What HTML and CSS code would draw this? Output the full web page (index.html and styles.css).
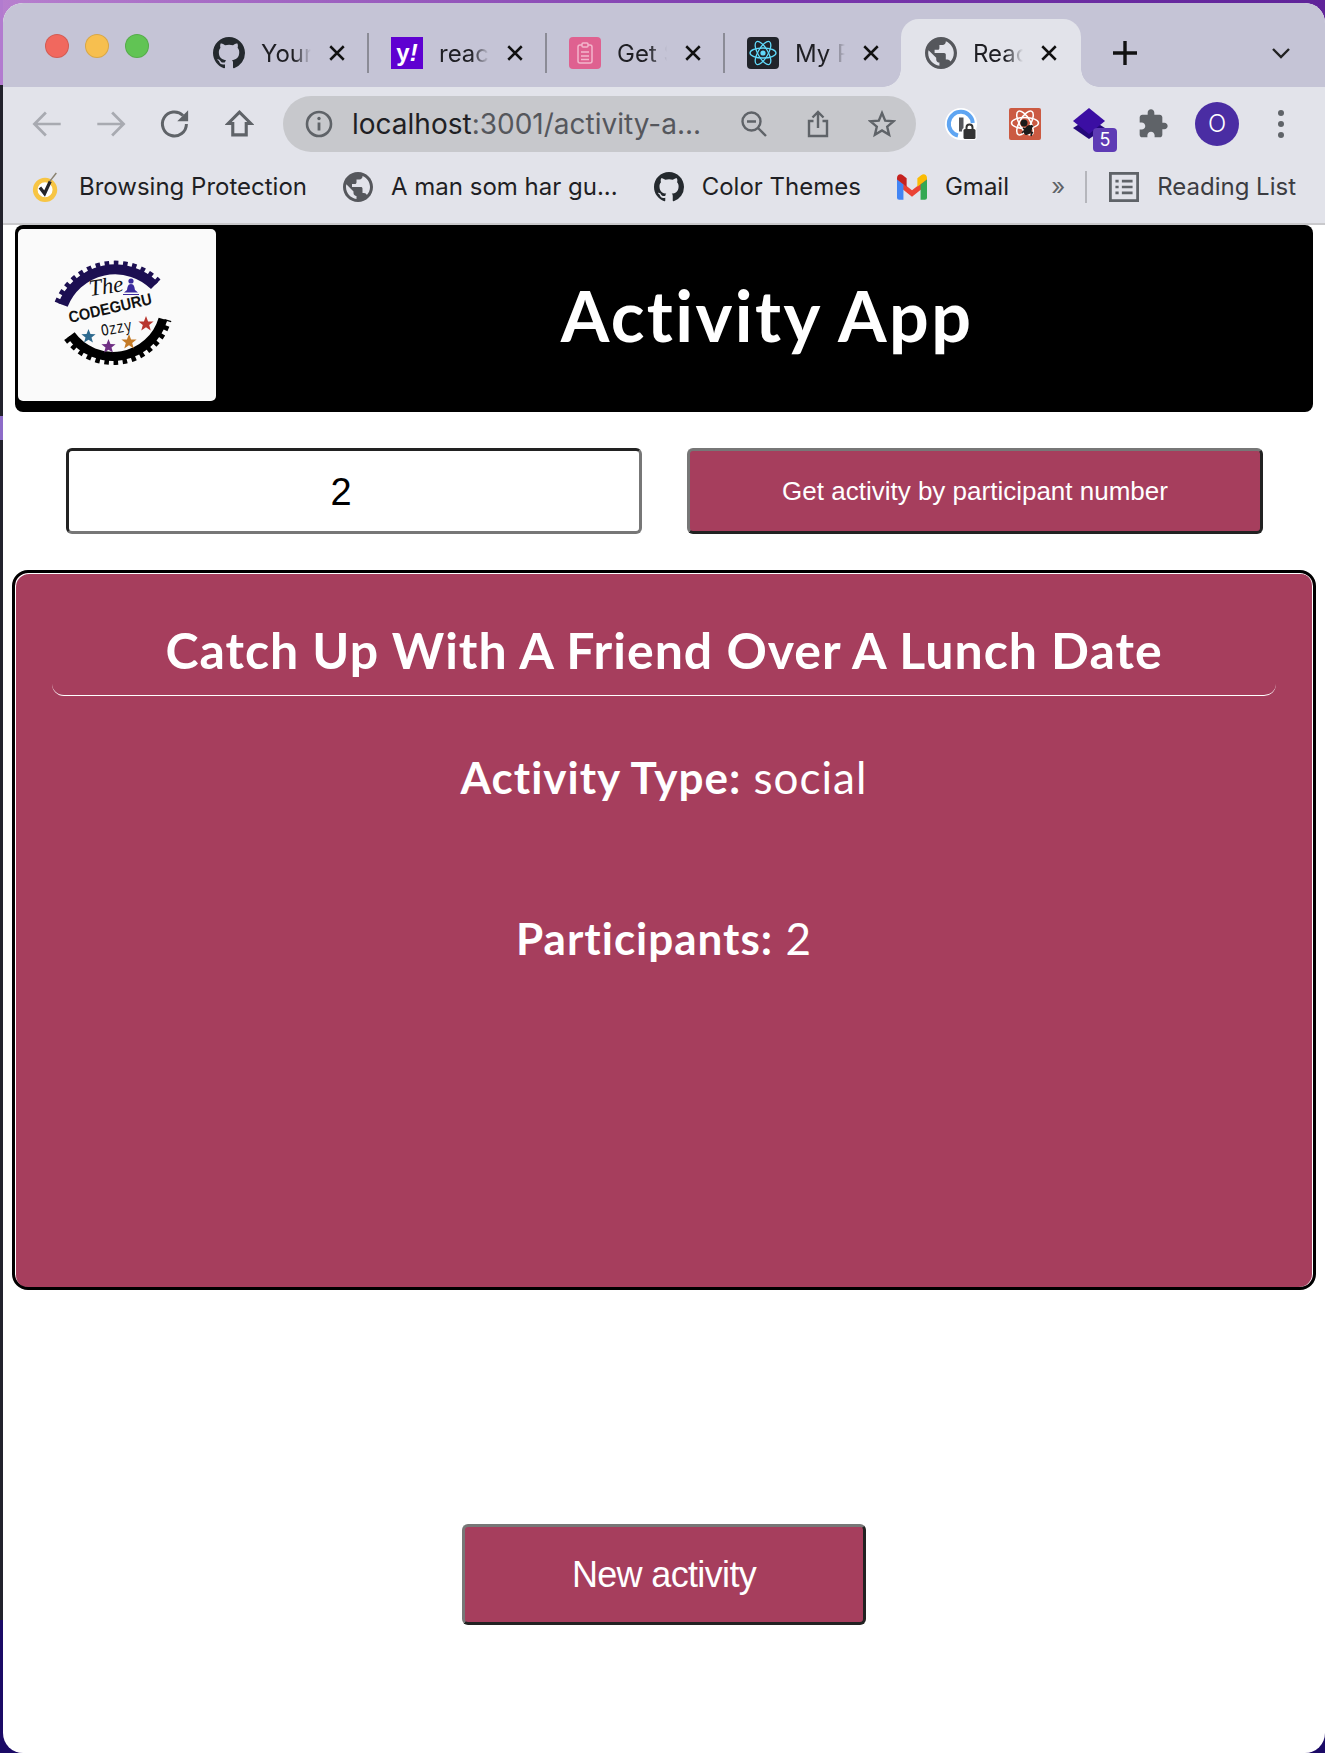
FILE: index.html
```html
<!DOCTYPE html>
<html lang="en">
<head>
    <meta charset="UTF-8">
    <title>React App</title>
    <link rel="stylesheet" href="styles.css">
</head>
<body>
    <!-- shared icons -->
    <svg class="icon-defs">
        <symbol id="github" viewBox="0 0 16 16"><path fill="#24292e" d="M8 0C3.58 0 0 3.58 0 8c0 3.54 2.29 6.53 5.47 7.59.4.07.55-.17.55-.38 0-.19-.01-.82-.01-1.49-2.01.37-2.53-.49-2.69-.94-.09-.23-.48-.94-.82-1.13-.28-.15-.68-.52-.01-.53.63-.01 1.08.58 1.23.82.72 1.21 1.87.87 2.33.66.07-.52.28-.87.51-1.07-1.78-.2-3.64-.89-3.64-3.95 0-.87.31-1.59.82-2.15-.08-.2-.36-1.02.08-2.12 0 0 .67-.21 2.2.82.64-.18 1.32-.27 2-.27.68 0 1.36.09 2 .27 1.53-1.04 2.2-.82 2.2-.82.44 1.1.16 1.92.08 2.12.51.56.82 1.27.82 2.15 0 3.07-1.87 3.75-3.65 3.95.29.25.54.73.54 1.48 0 1.07-.01 1.93-.01 2.2 0 .21.15.46.55.38A8.013 8.013 0 0016 8c0-4.42-3.58-8-8-8z"/></symbol>
        <symbol id="globe" viewBox="2 2 20 20"><path fill="#55575c" d="M12 2C6.48 2 2 6.48 2 12s4.48 10 10 10 10-4.48 10-10S17.52 2 12 2zm-1 17.93c-3.95-.49-7-3.85-7-7.93 0-.62.08-1.21.21-1.79L9 15v1c0 1.1.9 2 2 2v1.93zm6.9-2.54c-.26-.81-1-1.39-1.9-1.39h-1v-3c0-.55-.45-1-1-1H8v-2h2c.55 0 1-.45 1-1V7h2c1.1 0 2-.9 2-2v-.41c2.93 1.19 5 4.06 5 7.41 0 2.08-.8 3.97-2.1 5.39z"/></symbol>
        <symbol id="close" viewBox="0 0 16 16"><path fill="none" stroke="#111" stroke-width="2.2" d="M2 2l12 12M14 2L2 14"/></symbol>
        <symbol id="star" viewBox="-10 -10 20 20"><polygon points="0,-10 2.6,-3.2 9.5,-3.1 4,1.3 5.9,8.1 0,4.2 -5.9,8.1 -4,1.3 -9.5,-3.1 -2.6,-3.2"/></symbol>
    </svg>

    <div class="window">
        <div class="tab-strip">
            <div class="lights">
                <span class="light red"></span>
                <span class="light yellow"></span>
                <span class="light green"></span>
            </div>

            <div class="tab">
                <svg class="favicon"><use href="#github"/></svg>
                <span class="tab-title">Your</span>
                <svg class="tab-close"><use href="#close"/></svg>
            </div>
            <span class="tab-sep"></span>
            <div class="tab">
                <span class="favicon yahoo">y<i>!</i></span>
                <span class="tab-title">react</span>
                <svg class="tab-close"><use href="#close"/></svg>
            </div>
            <span class="tab-sep"></span>
            <div class="tab">
                <svg class="favicon" viewBox="0 0 32 32">
                    <rect width="32" height="32" rx="4" fill="#df6190"/>
                    <rect x="9" y="8" width="14" height="18" rx="2" fill="none" stroke="#f3b6cc" stroke-width="1.5"/>
                    <rect x="13" y="6" width="6" height="4" rx="1" fill="#df6190" stroke="#f3b6cc" stroke-width="1.5"/>
                    <path d="M12 15h8M12 19h8M12 22.5h8" stroke="#f3b6cc" stroke-width="1.3"/>
                </svg>
                <span class="tab-title">Get Started</span>
                <svg class="tab-close"><use href="#close"/></svg>
            </div>
            <span class="tab-sep"></span>
            <div class="tab">
                <svg class="favicon" viewBox="0 0 32 32">
                    <rect width="32" height="32" rx="4" fill="#20232a"/>
                    <g fill="none" stroke="#61dafb" stroke-width="1.3">
                        <ellipse cx="16" cy="16" rx="13" ry="5"/>
                        <ellipse cx="16" cy="16" rx="13" ry="5" transform="rotate(60 16 16)"/>
                        <ellipse cx="16" cy="16" rx="13" ry="5" transform="rotate(120 16 16)"/>
                    </g>
                    <circle cx="16" cy="16" r="2.6" fill="#61dafb"/>
                </svg>
                <span class="tab-title">My React</span>
                <svg class="tab-close"><use href="#close"/></svg>
            </div>
            <div class="tab active">
                <svg class="favicon"><use href="#globe"/></svg>
                <span class="tab-title">React App</span>
                <svg class="tab-close"><use href="#close"/></svg>
            </div>

            <svg class="new-tab" viewBox="0 0 26 26"><path stroke="#111" stroke-width="3.4" d="M13 1v24M1 13h24"/></svg>
            <svg class="tab-list" viewBox="0 0 20 12"><path fill="none" stroke="#222" stroke-width="2.4" d="M2 2l8 8 8-8"/></svg>
        </div>

        <div class="toolbar">
            <div class="tool">
                <svg viewBox="0 0 28 28"><path fill="none" stroke="#a8aab1" stroke-width="2.4" d="M26 14H3M13 4L3 14l10 10"/></svg>
            </div>
            <div class="tool">
                <svg viewBox="0 0 28 28"><path fill="none" stroke="#a8aab1" stroke-width="2.4" d="M2 14h23M15 4l10 10-10 10"/></svg>
            </div>
            <div class="tool">
                <svg viewBox="0 0 28 28"><path fill="none" stroke="#5f6368" stroke-width="2.6" d="M24 14a10.5 10.5 0 1 1-3-7.4"/><path fill="#5f6368" d="M25.500 2v9.500H16z"/></svg>
            </div>
            <div class="tool">
                <svg class="home-icon" viewBox="0 0 28 28"><path fill="none" stroke="#5f6368" stroke-width="3" d="M14 3L3 14h4.500v11h13V14H25z"/></svg>
            </div>

            <div class="omnibox">
                <svg class="omni-icon" viewBox="0 0 28 28"><circle cx="14" cy="14" r="12" fill="none" stroke="#5f6368" stroke-width="2.6"/><path stroke="#5f6368" stroke-width="2.8" d="M14 12.500v8"/><circle cx="14" cy="8.500" r="1.700" fill="#5f6368"/></svg>
                <span class="url"><span class="url-host">localhost</span>:3001/activity-a...</span>
                <div class="omni-right">
                    <svg class="omni-icon" viewBox="0 0 28 28"><circle cx="11.500" cy="11.500" r="9" fill="none" stroke="#5f6368" stroke-width="2.4"/><path stroke="#5f6368" stroke-width="2.4" d="M7 11.500h9M18 18l8 8"/></svg>
                    <svg class="omni-icon" viewBox="0 0 28 28"><path fill="none" stroke="#5f6368" stroke-width="2.4" d="M9.500 11H5v15h18V11h-4.500M14 18V2M8.500 7.500L14 2l5.500 5.500"/></svg>
                    <svg class="omni-icon" viewBox="0 0 28 28"><path fill="none" stroke="#5f6368" stroke-width="2.4" d="M14 3l3.200 7.600 8.300.7-6.300 5.400 1.900 8.100-7.100-4.300-7.100 4.300 1.900-8.100-6.300-5.400 8.300-.7z"/></svg>
                </div>
            </div>

            <div class="extensions">
                <div class="tool">
                    <svg viewBox="0 0 32 32">
                        <circle cx="16" cy="16" r="16" fill="#fff"/>
                        <path fill="none" stroke="#5fa5f2" stroke-width="4" d="M13 27.500A12 12 0 1 1 27.800 15"/>
                        <rect x="14" y="9.500" width="4.500" height="14" fill="#55575c"/>
                        <rect x="17" y="20" width="14.500" height="12" rx="2.500" fill="#fff"/>
                        <rect x="18.500" y="21" width="12" height="10" rx="1.500" fill="#333"/>
                        <path fill="none" stroke="#333" stroke-width="2" d="M21.500 21.500v-2a3 3 0 0 1 6 0v2"/>
                    </svg>
                </div>
                <div class="tool">
                    <svg viewBox="0 0 32 32">
                        <rect width="32" height="32" rx="2" fill="#cb5a42"/>
                        <g fill="none" stroke="#fff" stroke-width="1.500">
                            <ellipse cx="16" cy="15" rx="13.500" ry="5.500"/>
                            <ellipse cx="16" cy="15" rx="13.500" ry="5.500" transform="rotate(60 16 15)"/>
                            <ellipse cx="16" cy="15" rx="13.500" ry="5.500" transform="rotate(120 16 15)"/>
                        </g>
                        <circle cx="15" cy="15" r="3.500" fill="#1b1b1b"/>
                        <ellipse cx="19" cy="22" rx="3.500" ry="5.500" fill="#1b1b1b" transform="rotate(30 19 22)"/>
                        <path stroke="#1b1b1b" stroke-width="1.600" d="M14 20l10 5M15 24l9-6M23 17l-1 3M13 25l3-3M22 28l1-4"/>
                    </svg>
                </div>
                <div class="tool">
                    <svg viewBox="0 0 32 32">
                        <path fill="#24087a" d="M16 10L32 20 16 31 0 20z"/>
                        <path fill="#3b0ea3" d="M16 0l16 13-16 13L0 13z"/>
                    </svg>
                    <span class="ext-badge">5</span>
                </div>
                <div class="tool">
                    <svg viewBox="0 0 24 24"><path fill="#5f6368" d="M20.500 11H19V7c0-1.100-.9-2-2-2h-4V3.500C13 2.120 11.880 1 10.500 1S8 2.120 8 3.500V5H4c-1.100 0-1.990.9-1.990 2v3.800H3.500c1.490 0 2.700 1.210 2.700 2.700s-1.210 2.700-2.700 2.700H2V20c0 1.100.9 2 2 2h3.800v-1.500c0-1.490 1.210-2.700 2.700-2.700 1.490 0 2.700 1.210 2.700 2.700V22H17c1.100 0 2-.9 2-2v-4h1.500c1.380 0 2.500-1.120 2.500-2.500S21.880 11 20.500 11z"/></svg>
                </div>
                <div class="tool"><span class="avatar">O</span></div>
                <div class="tool">
                    <svg viewBox="0 0 32 32"><circle cx="16" cy="5" r="3" fill="#5f6368"/><circle cx="16" cy="16" r="3" fill="#5f6368"/><circle cx="16" cy="27" r="3" fill="#5f6368"/></svg>
                </div>
            </div>
        </div>

        <div class="bookmarks">
            <div class="bookmark">
                <svg class="bm-icon" viewBox="0 0 28 32">
                    <circle cx="13" cy="19" r="10.500" fill="#fff" stroke="#f7c544" stroke-width="5"/>
                    <path fill="none" stroke="#26262a" stroke-width="3.500" d="M7.500 16.500l5 6.500L18.500 10"/>
                    <path stroke="#8a8270" stroke-width="1.600" d="M18 10l7-9"/>
                </svg>
                <span>Browsing Protection</span>
            </div>
            <div class="bookmark">
                <svg class="bm-icon"><use href="#globe"/></svg>
                <span>A man som har gu...</span>
            </div>
            <div class="bookmark">
                <svg class="bm-icon"><use href="#github"/></svg>
                <span>Color Themes</span>
            </div>
            <div class="bookmark">
                <svg class="bm-icon" viewBox="0 0 28 24">
                    <path fill="#ea4335" d="M0 4l14 11L28 4v6L14 21 0 10z"/>
                    <path fill="#c5221f" d="M0 3.500C0 .5 3 -1 5.500 1L9 3.800v8L0 5z"/>
                    <path fill="#fbbc04" d="M28 3.500c0-3-3-4.500-5.500-2.500L19 3.800v8L28 5z"/>
                    <path fill="#4285f4" d="M0 5l6 4.700V24H2a2 2 0 0 1-2-2z"/>
                    <path fill="#34a853" d="M28 5l-6 4.700V24h4a2 2 0 0 0 2-2z"/>
                </svg>
                <span>Gmail</span>
            </div>
            <span class="bm-more">»</span>
            <span class="bm-sep"></span>
            <div class="bookmark reading">
                <svg class="bm-icon" viewBox="0 0 28 28">
                    <rect x="1.300" y="1.300" width="25.400" height="25.400" fill="none" stroke="#5f6368" stroke-width="2.600"/>
                    <path stroke="#5f6368" stroke-width="2.400" d="M6 8.500h3M12 8.500h10M6 14h3M12 14h10M6 19.500h3M12 19.500h10"/>
                </svg>
                <span>Reading List</span>
            </div>
        </div>

        <div class="page">
            <header class="app-header">
                <div class="logo">
                    <svg viewBox="0 0 198 172">
                        <g fill="none">
                            <path stroke="#1c0f52" stroke-width="10" d="M45 76A56 56 0 0 1 136.500 56.500"/>
                            <path stroke="#1c0f52" stroke-width="7" stroke-dasharray="4.500 4.500" d="M40 74A61 61 0 0 1 140 53"/>
                            <path stroke="#000" stroke-width="9" d="M53 106A52 52 0 0 0 145 90"/>
                            <path stroke="#000" stroke-width="7" stroke-dasharray="4.500 4.500" d="M49 109A57 57 0 0 0 150 91"/>
                        </g>
                        <text class="logo-the" x="72" y="67" transform="rotate(-8 72 67)">The</text>
                        <circle cx="113" cy="52" r="2.600" fill="#3a2a9c"/>
                        <path fill="#3a2a9c" d="M113 55c3 0 3.500 3 4 6l3 2.500h-14l3-2.500c.5-3 1-6 4-6zM105 65h16v1h-16z"/>
                        <text class="logo-name" x="52" y="94" textLength="85" lengthAdjust="spacingAndGlyphs" transform="rotate(-13 52 94)">CODEGURU</text>
                        <text class="logo-ozzy" x="84" y="107" textLength="31" lengthAdjust="spacingAndGlyphs" transform="rotate(-10 84 107)">Ozzy</text>
                        <use href="#star" x="63" y="100" width="15" height="15" fill="#2e6a8f"/>
                        <use href="#star" x="83" y="110" width="15" height="15" fill="#6f2f84"/>
                        <use href="#star" x="103" y="105" width="16" height="16" fill="#c47a26"/>
                        <use href="#star" x="120" y="87" width="16" height="16" fill="#b8372f"/>
                    </svg>
                </div>
                <h1 class="app-title">Activity App</h1>
            </header>

            <div class="search-row">
                <input class="participants-input" type="text" value="2">
                <button class="app-button small">Get activity by participant number</button>
            </div>

            <section class="activity-card">
                <h2 class="activity-title">Catch Up With A Friend Over A Lunch Date</h2>
                <p class="activity-line"><strong>Activity Type:</strong> social</p>
                <p class="activity-line"><strong>Participants:</strong> 2</p>
            </section>

            <div class="new-row">
                <button class="app-button large">New activity</button>
            </div>
        </div>
    </div>
</body>
</html>
```

FILE: styles.css
```css
* {
    box-sizing: border-box;
}
body {
    margin: 0;
    height: 1753px;
    overflow: hidden;
    font-family: Inter, "Noto Sans", sans-serif;
    background:
        linear-gradient(to bottom, #b27bcf 0, #b27bcf 85px, #22222c 85px, #22222c 416px, #8d6cc8 416px, #8d6cc8 440px, #22222c 440px, #22222c 1620px, #1b0a66 1620px) 0 0 / 3px 100% no-repeat,
        linear-gradient(to right, #b77fce, #7a38ad 60%, #5f2399) 0 0 / 100% 40px no-repeat,
        #1b0a66;
}
.icon-defs {
    display: none;
}

/* browser window */
.window {
    margin: 3px 0 0 3px;
    height: 1750px;
    background: #fff;
    border-radius: 20px;
    overflow: hidden;
}
.tab-strip {
    display: flex;
    align-items: flex-end;
    height: 84px;
    padding-left: 42px;
    background: #c5c4d6;
}
.lights {
    display: flex;
    gap: 16px;
    align-self: flex-start;
    margin: 31px 42px 0 0;
}
.light {
    width: 24px;
    height: 24px;
    border-radius: 50%;
    border: 1px solid rgba(0,0,0,0.12);
}
.light.red { background: #f1685e; }
.light.yellow { background: #f7bf4f; }
.light.green { background: #61c454; }

.tab {
    display: flex;
    align-items: center;
    flex: none;
    width: 176px;
    height: 68px;
    padding-left: 22px;
    font-size: 24px;
    color: #1f1f24;
}
.tab.active {
    position: relative;
    width: 180px;
    padding-left: 24px;
    background: #e2e3ea;
    border-radius: 18px 18px 0 0;
}
.tab.active::before,
.tab.active::after {
    content: "";
    position: absolute;
    bottom: 0;
    width: 18px;
    height: 18px;
}
.tab.active::before {
    left: -18px;
    background: radial-gradient(circle at 0 0, transparent 17.500px, #e2e3ea 18px);
}
.tab.active::after {
    right: -18px;
    background: radial-gradient(circle at 100% 0, transparent 17.500px, #e2e3ea 18px);
}
.favicon {
    flex: none;
    width: 32px;
    height: 32px;
}
.yahoo {
    display: flex;
    align-items: center;
    justify-content: center;
    background: #5f01d1;
    color: #fff;
    font-family: "Liberation Sans", sans-serif;
    font-size: 24px;
    font-weight: bold;
}
.tab-title {
    width: 50px;
    margin-left: 16px;
    overflow: hidden;
    white-space: nowrap;
    -webkit-mask-image: linear-gradient(to right, #000 65%, transparent 100%);
    mask-image: linear-gradient(to right, #000 65%, transparent 100%);
}
.tab-close {
    flex: none;
    width: 18px;
    height: 18px;
    margin-left: 17px;
}
.tab-sep {
    flex: none;
    width: 2px;
    height: 40px;
    margin-bottom: 14px;
    background: #8b8b96;
}
.new-tab {
    width: 26px;
    height: 26px;
    margin: 0 0 21px 31px;
}
.tab-list {
    width: 20px;
    height: 12px;
    margin: 0 34px 28px auto;
}

/* toolbar */
.toolbar {
    display: flex;
    align-items: center;
    height: 73px;
    padding-left: 12px;
    background: #e2e3ea;
}
.tool {
    position: relative;
    display: flex;
    align-items: center;
    justify-content: center;
    flex: none;
    width: 64px;
    height: 64px;
}
.tool svg {
    width: 32px;
    height: 32px;
}
.tool svg.home-icon {
    width: 29px;
    height: 29px;
}
.omnibox {
    display: flex;
    align-items: center;
    flex: none;
    width: 633px;
    height: 56px;
    margin-left: 12px;
    padding: 0 20px 0 22px;
    background: #c7c8cc;
    border-radius: 28px;
}
.omni-icon {
    flex: none;
    width: 28px;
    height: 28px;
}
.url {
    margin-left: 19px;
    font-size: 28px;
    color: #55575c;
    white-space: nowrap;
}
.url-host {
    color: #1f1f24;
}
.omni-right {
    display: flex;
    gap: 36px;
    margin-left: auto;
}
.extensions {
    display: flex;
    margin-left: 13px;
}
.ext-badge {
    position: absolute;
    right: 4px;
    bottom: 4px;
    width: 24px;
    height: 24px;
    background: #5e3bb5;
    border-radius: 4px;
    color: #fff;
    font-size: 18px;
    line-height: 24px;
    text-align: center;
}
.avatar {
    width: 44px;
    height: 44px;
    background: #4a2da3;
    border-radius: 50%;
    color: #fff;
    font-size: 24px;
    font-weight: 300;
    line-height: 44px;
    text-align: center;
}

/* bookmarks bar */
.bookmarks {
    display: flex;
    align-items: center;
    height: 65px;
    padding: 0 0 10px 28px;
    background: #e2e3ea;
    border-bottom: 2px solid #c9c9cc;
    font-size: 24px;
    color: #1f1f24;
}
.bookmark {
    display: flex;
    align-items: center;
    gap: 18px;
    margin-right: 36px;
}
.bm-icon {
    flex: none;
    width: 30px;
    height: 30px;
}
.bm-more {
    margin-left: auto;
    color: #5f6368;
    font-size: 24px;
}
.bm-sep {
    width: 2px;
    height: 32px;
    margin: 0 22px 0 20px;
    background: #b5b6bc;
}
.bookmark.reading {
    margin-right: 29px;
    color: #3c3d42;
}

/* the app */
.page {
    padding: 0 0 0 9px;
    font-family: Lato, "Open Sans", sans-serif;
}
.app-header {
    display: flex;
    align-items: center;
    width: 1298px;
    height: 187px;
    margin-left: 3px;
    padding: 4px 3px 11px;
    background: #000;
    border-radius: 8px;
}
.logo {
    flex: none;
    width: 198px;
    height: 172px;
    background: #fafafa;
    border-radius: 5px;
}
.logo svg {
    display: block;
    width: 100%;
    height: 100%;
}
.logo-the {
    font-family: "Liberation Serif", serif;
    font-style: italic;
    font-size: 23px;
    fill: #111;
}
.logo-name {
    font-family: "Liberation Sans", sans-serif;
    font-weight: bold;
    font-size: 16px;
    fill: #111;
}
.logo-ozzy {
    font-family: "Liberation Mono", monospace;
    font-size: 17px;
    fill: #111;
}
.app-title {
    flex: 1;
    margin: 0;
    padding-left: 8px;
    color: #fff;
    font-size: 70px;
    font-weight: 700;
    letter-spacing: 2.4px;
    text-align: center;
}
.search-row {
    display: grid;
    grid-template-columns: 576px 576px;
    gap: 45px;
    margin: 36px 0 0 54px;
}
.participants-input {
    height: 86px;
    padding: 2px 26px 0 0;
    border: 3px solid;
    border-color: #222 #777 #777 #222;
    border-radius: 6px;
    background: #fff;
    font-family: "Liberation Sans", sans-serif;
    font-size: 38px;
    text-align: center;
    color: #000;
}
.app-button {
    border: 3px solid;
    border-color: #777 #222 #222 #777;
    border-radius: 6px;
    background: #a63e5d;
    color: #fff;
    font-family: "Liberation Sans", sans-serif;
}
.app-button.small {
    height: 86px;
    padding-top: 2px;
    font-size: 26px;
}
.app-button.large {
    width: 404px;
    height: 101px;
    font-size: 36px;
    letter-spacing: -0.65px;
}
.activity-card {
    width: 1304px;
    height: 720px;
    margin-top: 36px;
    padding: 0 37px;
    border: 3px solid #000;
    border-radius: 16px;
    background: #a63e5d;
    box-shadow: inset 1px 1px 0 #fff, inset -1px 0 0 #fff;
    color: #fff;
    text-align: center;
}
.activity-title {
    height: 123px;
    margin: 0;
    padding-top: 47px;
    border-bottom: 1px solid #fff;
    border-radius: 0 0 12px 12px;
    font-size: 50px;
    font-weight: 700;
    letter-spacing: 1px;
    line-height: 60px;
}
.activity-line {
    height: 161px;
    margin: 0;
    padding-top: 55px;
    font-size: 44px;
    letter-spacing: 1px;
    line-height: 52px;
}
.activity-line strong {
    font-weight: 700;
}
.new-row {
    display: flex;
    justify-content: center;
    width: 1304px;
    margin-top: 234px;
}
```
